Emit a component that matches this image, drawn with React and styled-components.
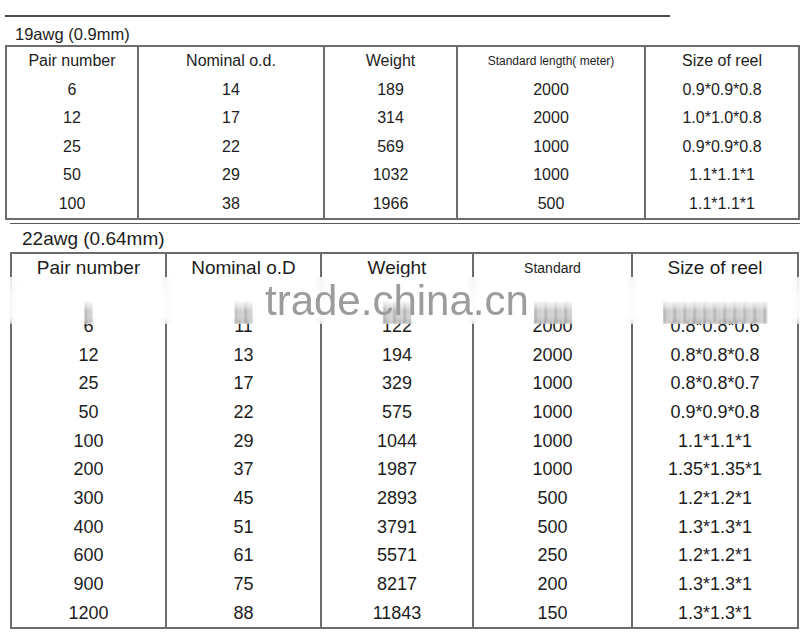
import React from "react";
import styled, { createGlobalStyle } from "styled-components";

const Global = createGlobalStyle`
  html, body { margin: 0; padding: 0; background: #fff; }
  body { font-family: "Liberation Sans", Arial, sans-serif; color: #1d1d1d; }
  * { box-sizing: border-box; }
`;

const Page = styled.div`
  position: relative;
  width: 800px;
  height: 634px;
  overflow: hidden;
  padding-top: 15px;
  background: #fff;
`;

const Rule = styled.div`
  margin-left: ${(p) => p.$left}px;
  margin-top: ${(p) => p.$top || 0}px;
  width: ${(p) => p.$width}px;
  border-top: ${(p) => p.$thick}px solid ${(p) => p.$color};
`;

const Caption = styled.div`
  height: ${(p) => p.$h}px;
  padding-top: ${(p) => p.$pad}px;
  padding-left: ${(p) => p.$left}px;
  font-size: ${(p) => p.$size}px;
  line-height: ${(p) => p.$lh}px;
  color: #1d1d1d;
  white-space: nowrap;
`;

const Frame = styled.div`
  margin-left: ${(p) => p.$left}px;
  width: ${(p) => p.$width}px;
  border: 2px solid #6c6c6c;
`;

const Row = styled.div`
  display: grid;
  grid-template-columns: ${(p) => p.$cols};
  height: ${(p) => p.$h}px;
`;

const Cell = styled.div`
  position: relative;
  display: flex;
  justify-content: center;
  align-items: ${(p) => (p.$top ? "flex-start" : "center")};
  border-left: 2px solid #6c6c6c;
  &:first-child { border-left: none; }
  font-size: ${(p) => p.$size}px;
  line-height: ${(p) => p.$lh}px;
  white-space: nowrap;
  color: #1d1d1d;
`;

const Smudge = styled.div`
  position: absolute;
  left: 50%;
  bottom: 50%;
  height: 24px;
  margin-bottom: 2px;
  transform: translateX(-50%);
  background: repeating-linear-gradient(
    to right,
    rgba(85, 85, 85, 0.55) 0 3px,
    rgba(140, 140, 140, 0.25) 3px 6px,
    rgba(85, 85, 85, 0.45) 6px 8px,
    rgba(255, 255, 255, 0) 8px 10px
  );
  -webkit-mask-image: linear-gradient(to bottom, transparent 0%, #000 45%, #000 100%);
  mask-image: linear-gradient(to bottom, transparent 0%, #000 45%, #000 100%);
  filter: blur(1.6px);
  z-index: 3;
  pointer-events: none;
`;

const Band = styled.div`
  position: absolute;
  left: 10px;
  top: 277px;
  width: 790px;
  height: 47px;
  background: linear-gradient(
    to bottom,
    rgba(255, 255, 255, 0.75) 0%,
    rgba(255, 255, 255, 0.9) 40%,
    rgba(255, 255, 255, 0.9) 85%,
    rgba(255, 255, 255, 0.45) 100%
  );
  backdrop-filter: blur(3px);
  z-index: 2;
`;

const Watermark = styled.div`
  position: absolute;
  left: 265px;
  top: 280px;
  font-family: "Liberation Sans", Arial, sans-serif;
  font-size: 42px;
  line-height: 42px;
  color: #9c9c9c;
  white-space: nowrap;
  z-index: 4;
`;

const cols1 = "130px 186px 133px 188px 154px";
const cols2 = "153px 155px 152px 159px 166px";

const head1 = ["Pair number", "Nominal o.d.", "Weight", "Standard length( meter)", "Size of reel"];
const head2 = ["Pair number", "Nominal o.D", "Weight", "Standard", "Size of reel"];

const t1 = [
  ["6", "14", "189", "2000", "0.9*0.9*0.8"],
  ["12", "17", "314", "2000", "1.0*1.0*0.8"],
  ["25", "22", "569", "1000", "0.9*0.9*0.8"],
  ["50", "29", "1032", "1000", "1.1*1.1*1"],
  ["100", "38", "1966", "500", "1.1*1.1*1"],
];

const t2 = [
  ["6", "11", "122", "2000", "0.8*0.8*0.6"],
  ["12", "13", "194", "2000", "0.8*0.8*0.8"],
  ["25", "17", "329", "1000", "0.8*0.8*0.7"],
  ["50", "22", "575", "1000", "0.9*0.9*0.8"],
  ["100", "29", "1044", "1000", "1.1*1.1*1"],
  ["200", "37", "1987", "1000", "1.35*1.35*1"],
  ["300", "45", "2893", "500", "1.2*1.2*1"],
  ["400", "51", "3791", "500", "1.3*1.3*1"],
  ["600", "61", "5571", "250", "1.2*1.2*1"],
  ["900", "75", "8217", "200", "1.3*1.3*1"],
  ["1200", "88", "11843", "150", "1.3*1.3*1"],
];

export default function App() {
  return (
    <Page>
      <Global />
      <Rule $left={5} $width={665} $thick={2} $color="#4a4a4a" />
      <Caption $h={28} $pad={7.5} $left={15} $size={16.5} $lh={18}>
        19awg (0.9mm)
      </Caption>
      <Frame $left={5} $width={795}>
        <Row $cols={cols1} $h={28.5}>
          {head1.map((h, i) => (
            <Cell key={i} $size={i === 3 ? 12 : 16} $lh={18}>
              {h}
            </Cell>
          ))}
        </Row>
        {t1.map((r, ri) => (
          <Row key={ri} $cols={cols1} $h={28.5}>
            {r.map((v, i) => (
              <Cell key={i} $size={16} $lh={18}>
                {v}
              </Cell>
            ))}
          </Row>
        ))}
      </Frame>

      <Rule $left={10} $top={3} $width={790} $thick={1} $color="#5a5a5a" />
      <Caption $h={28} $pad={4.4} $left={22} $size={19} $lh={22}>
        22awg (0.64mm)
      </Caption>
      <Frame $left={10} $width={789}>
        <Row $cols={cols2} $h={57.5}>
          {head2.map((h, i) => (
            <Cell key={i} $top $size={i === 3 ? 14 : 19} $lh={28}>
              {h}
            </Cell>
          ))}
        </Row>
        {t2.map((r, ri) => (
          <Row key={ri} $cols={cols2} $h={28.7}>
            {r.map((v, i) => (
              <Cell key={i} $size={18} $lh={20}>
                {v}
                {ri === 0 && (
                  <Smudge aria-hidden="true" style={{ width: `${v.length * 9.5}px` }} />
                )}
              </Cell>
            ))}
          </Row>
        ))}
      </Frame>

      <Band />
      <Watermark>trade.china.cn</Watermark>
    </Page>
  );
}
